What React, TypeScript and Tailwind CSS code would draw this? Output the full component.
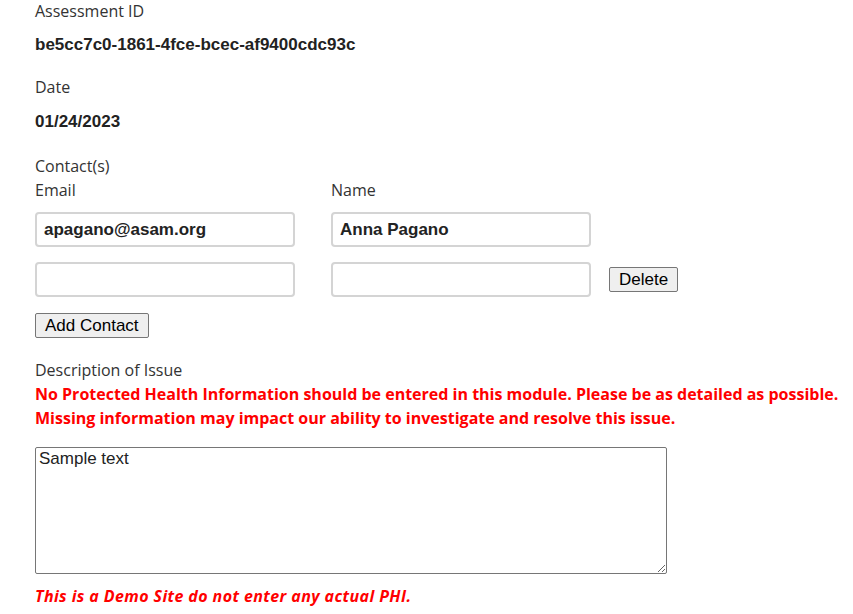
const label = "text-[16px] leading-[22px] text-[#333] font-['Open_Sans',sans-serif]";
const value = "text-[17px] leading-[20px] font-bold text-[#222] font-['Liberation_Sans',Arial,sans-serif]";
const input =
  "w-[260px] h-[35px] border-2 border-[#d4d4d4] rounded-[4px] px-[7px] text-[17px] font-bold text-[#222] font-['Liberation_Sans',Arial,sans-serif] outline-none";
const button =
  "h-[25px] px-[9px] border border-[#767676] bg-[#efefef] rounded-[2px] text-[17px] leading-[20px] text-black font-['Liberation_Sans',Arial,sans-serif]";

export default function App() {
  return (
    <div className="w-[853px] h-[614px] bg-white pl-[35px] overflow-hidden">
      <div className={label}>Assessment ID</div>
      <div className={`${value} mt-[13px]`}>be5cc7c0-1861-4fce-bcec-af9400cdc93c</div>

      <div className={`${label} mt-[21px]`}>Date</div>
      <div className={`${value} mt-[14px]`}>01/24/2023</div>

      <div className={`${label} mt-[23px]`}>Contact(s)</div>
      <div className="flex gap-[36px]">
        <div className={`${label} w-[260px] mt-[2px]`}>Email</div>
        <div className={`${label} mt-[2px]`}>Name</div>
      </div>

      <div className="flex items-center gap-[36px] mt-[11px]">
        <input className={input} defaultValue="apagano@asam.org" />
        <input className={input} defaultValue="Anna Pagano" />
      </div>
      <div className="flex items-center mt-[15px]">
        <input className={input} defaultValue="" />
        <input className={`${input} ml-[36px]`} defaultValue="" />
        <button className={`${button} ml-[18px]`}>Delete</button>
      </div>

      <button className={`${button} mt-[16px]`}>Add Contact</button>

      <div className={`${label} mt-[21px]`}>Description of Issue</div>
      <div className="mt-[1px] text-[16px] leading-[24px] font-bold text-[#f00] font-['Open_Sans',sans-serif] whitespace-nowrap">
        <div>No Protected Health Information should be entered in this module. Please be as detailed as possible.</div>
        <div>Missing information may impact our ability to investigate and resolve this issue.</div>
      </div>

      <textarea
        className="block mt-[17px] w-[632px] h-[127px] border border-[#767676] rounded-[2px] px-[3px] py-[1px] text-[17px] leading-[20px] text-[#222] font-['Liberation_Sans',Arial,sans-serif] outline-none"
        defaultValue="Sample text"
      />

      <div className="mt-[10px] text-[16px] leading-[24px] font-bold italic text-[#f00] font-['Open_Sans',sans-serif] tracking-[0.4px]">
        This is a Demo Site do not enter any actual PHI.
      </div>
    </div>
  );
}
